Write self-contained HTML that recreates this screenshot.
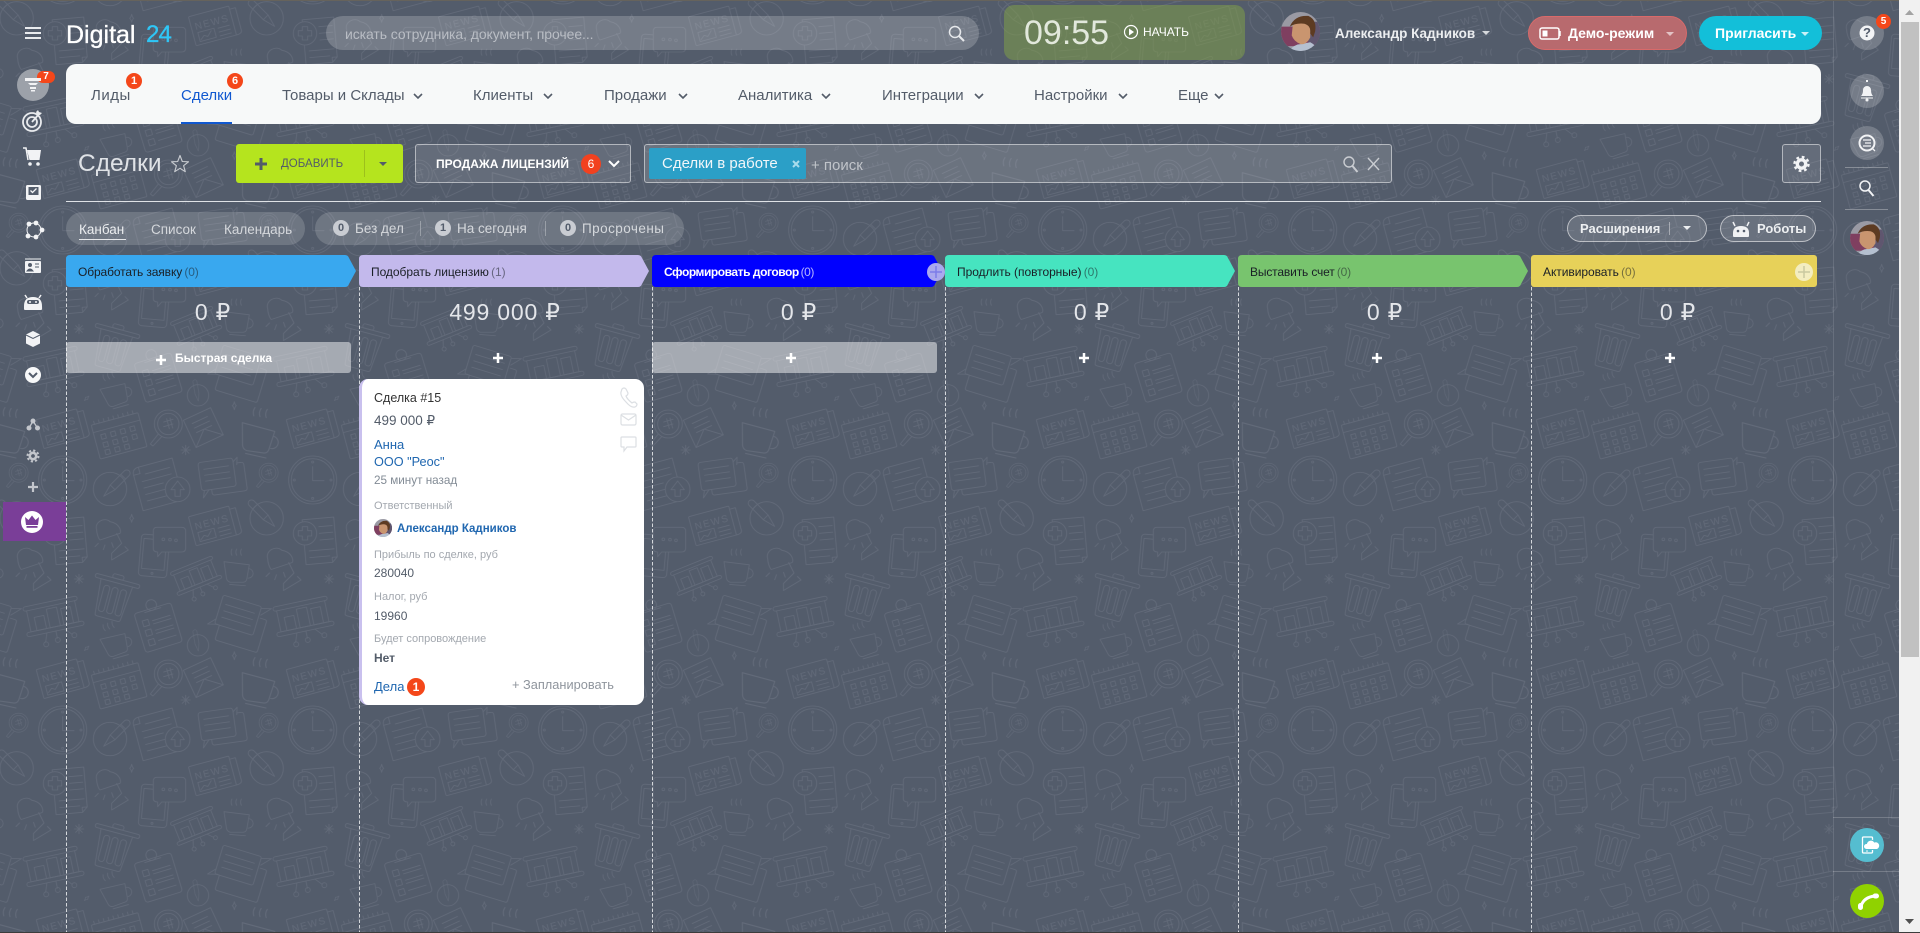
<!DOCTYPE html>
<html lang="ru"><head><meta charset="utf-8"><title>Сделки</title>
<style>
html,body{margin:0;padding:0;width:1920px;height:933px;overflow:hidden;background:#535c6b;font-family:"Liberation Sans","DejaVu Sans",sans-serif;color:#fff}
.a{position:absolute;box-sizing:border-box}
.t{position:absolute;white-space:nowrap;line-height:20px;height:20px}
svg{position:absolute;left:0;top:0}
.g{color:#535c69}
.hd{font-size:12px;color:#1a1f26;letter-spacing:-.05px}
.hd i{font-style:normal;opacity:.55;margin-left:-1px}
.sum{font-size:23px;color:#e4e6ea;transform:translateX(-50%);font-weight:400;letter-spacing:.8px}
.cl{font-size:11px;color:#a3a8af}
.cv{font-size:12px;color:#535c69}
.lk{color:#2067b0}
.pill{background:rgba(255,255,255,.16);border-radius:17px}
.b{width:16px;height:16px;border-radius:50%;background:#f4471a;color:#fff;font-size:11px;font-weight:700;text-align:center;line-height:16px;position:absolute}
.c{width:16px;height:16px;border-radius:50%;background:#c9ccd2;color:#535c6b;font-size:11px;font-weight:700;text-align:center;line-height:16px;position:absolute;top:220px}
.n{font-size:15px;top:86px;color:#535c69}
</style></head><body>

<svg width="1920" height="933">
<defs>
<g id="cup"><path d="M0 0l80 10-8 45q-2 10-12 10h-40q-10-2-12-12z"/><path d="M78 22a14 14 0 0 1-2 30"/><path d="M18 72l50 4"/><path d="M25-20q-5-10 0-20M40-20q-5-10 0-20M55-20q-5-10 0-20"/></g>
<g id="board"><rect x="0" y="0" width="180" height="14" rx="7"/><path d="M10 14v70h160v-70"/><rect x="-5" y="84" width="190" height="14" rx="7"/><rect x="30" y="40" width="32" height="44"/><rect x="74" y="22" width="34" height="62"/><rect x="120" y="30" width="32" height="54"/><path d="M90 98v24M60 98l-10 28M120 98l20 22"/><circle cx="90" cy="128" r="8"/><circle cx="50" cy="134" r="8"/><circle cx="146" cy="124" r="8"/></g>
<g id="lamp"><path d="M5 40c-8-25 25-40 40-25 30 5 35 30 30 35l-60 20c-5-5-10-20-10-30z"/><path d="M65 50l15 30-30 30v20l50-30-10-10"/><path d="M10 80l-10 10M30 85l-5 14M50 78l5 14"/></g>
<g id="mag"><circle cx="0" cy="0" r="42"/><circle cx="0" cy="0" r="32"/><path d="M-14-6l28-8M-14 8l28-8M-5-16l8 30M5-18l8 30"/><path d="M-30 30l-24 30 8 6 26-28"/></g>
<g id="stb"><path d="M0-14V14M-14 0H14M-10-10L10 10M-10 10L10-10"/></g>
<g id="star"><path d="M0-12q2 9 6 12q-4 3-6 12q-2-9-6-12q4-3 6-12z"/></g>
<g id="tile" fill="none" stroke="#626a79" stroke-width="2.600" stroke-linejoin="round" stroke-linecap="round">
<g transform="rotate(-15 490 78)"><rect x="425" y="32" width="125" height="90" rx="3"/><path d="M550 42h18v70q0 10-18 10"/><path d="M440 85h50v28h-50zM502 88h35M502 100h35M502 112h35"/><path d="M444 108l12-10 10 6 14-14"/><text x="436" y="76" font-size="30" letter-spacing="4" fill="#626a79" stroke="none" font-family="Liberation Sans,sans-serif">NEWS</text></g>
<circle cx="650" cy="55" r="50"/><g transform="translate(640 45) rotate(45)"><path d="M-50-10h60l38 10-38 10h-60a10 10 0 0 1 0-20z"/><path d="M-35-10v20M10-10v20"/></g>
<g transform="rotate(-5 810 120)"><path d="M762 55h95v120l-15 15h-80z"/><path d="M842 190v-15h15M810 80h40M810 100h40M810 120h40M775 150h75M775 170h60"/></g><circle cx="765" cy="100" r="35" fill="#535c6b"/><path d="M757 80h16v12h12v16h-12v12h-16v-12h-12v-16h12z"/>
<use href="#lamp" transform="translate(885 50)"/>
<use href="#star" transform="translate(995 55)"/>
<rect x="1020" y="105" width="85" height="125" rx="10" transform="rotate(5 1060 165)"/><rect x="1028" y="118" width="68" height="90" transform="rotate(5 1060 165)"/><circle cx="1056" cy="220" r="3"/>
<path fill="#535c6b" d="M1070 82h75q12 0 12 12v50q0 12-12 12h-60l-12 14v-14q-14 0-13-12v-50q0-12 10-12z"/><circle cx="1090" cy="118" r="4"/><circle cx="1110" cy="119" r="4"/><circle cx="1128" cy="121" r="4"/>
<use href="#cup" transform="translate(522 185) scale(.95) rotate(0)"/>
<use href="#lamp" transform="translate(648 135) scale(1.05)"/>
<use href="#stb" transform="translate(837 237)"/>
<g transform="rotate(15 940 280)"><path d="M880 235h125q6 0 6 6t-6 6h-125q-6 0-6-6t6-6z"/><path d="M893 247l10 105q0 6 8 6h62q8 0 8-6l10-105"/><rect x="925" y="222" width="34" height="13" rx="6"/><rect x="908" y="262" width="18" height="80" rx="8"/><rect x="934" y="262" width="18" height="80" rx="8"/><rect x="960" y="262" width="18" height="80" rx="8"/></g>
<use href="#board" transform="translate(360 218) rotate(-22) scale(.75)"/>
<use href="#board" transform="translate(1110 218) rotate(-22) scale(.75)"/>
<g transform="rotate(17 560 360)"><rect x="500" y="300" width="120" height="90" rx="6" fill="#535c6b"/><path d="M515 325h90M515 345h90M515 365h90M500 375l-20 22 30-8M622 305l28-8-25 28"/><path d="M515 390v40q0 6 6 6h120q6 0 6-6v-90q0-6-6-6h-15"/></g>
<use href="#board" transform="translate(668 322) rotate(-12) scale(.92)"/>
<g transform="rotate(-17 1075 385)"><rect x="1018" y="322" width="115" height="122" rx="8"/><circle cx="1075" cy="312" r="16"/><path d="M1050 328h50M1035 350h18v18h-18zM1035 380h18v18h-18zM1035 410h18v18h-18zM1065 358h55M1065 368h55M1065 388h55M1065 398h55M1065 420h55"/></g>
<use href="#cup" transform="translate(900 418) rotate(-20) scale(.95)"/>
<use href="#star" transform="translate(860 445) rotate(45) scale(.8)"/>
<use href="#star" transform="translate(553 467)"/>
<circle cx="1194" cy="436" r="32"/><g transform="translate(1190 425) rotate(80) scale(.6)"><path d="M-50-10h60l38 10-38 10h-60a10 10 0 0 1 0-20z"/></g>
<g transform="rotate(-25 480 540)"><path d="M420 480h90v90h-90z"/><path d="M420 570l45-40 45 40M440 500h50M440 515h50M440 530h50"/></g>
<use href="#cup" transform="translate(577 518) rotate(8) scale(1.25)"/>
<g transform="rotate(-15 785 535)"><rect x="718" y="490" width="125" height="90" rx="3"/><path d="M843 500h18v70q0 10-18 10"/><path d="M732 545h50v28h-50zM795 548h35M795 560h35M795 572h35"/><path d="M736 566l12-10 10 6 14-14"/><text x="728" y="532" font-size="30" letter-spacing="4" fill="#626a79" stroke="none" font-family="Liberation Sans,sans-serif">NEWS</text></g>
<g transform="rotate(-15 958 558)"><rect x="885" y="505" width="145" height="105" rx="3"/><path d="M885 528h145M895 505v-10M910 505v-10M925 505v-10M940 505v-10M955 505v-10M970 505v-10M985 505v-10M1000 505v-10M1015 505v-10"/><path d="M905 540h14v14h-14zM935 540h14v14h-14zM965 540h14v14h-14zM995 540h14v14h-14zM905 565h14v14h-14zM935 565h14v14h-14zM965 565h14v14h-14zM995 565h14v14h-14zM905 588h14v14h-14zM935 588h14v14h-14zM965 588h14v14h-14z"/></g>
<use href="#mag" transform="translate(1105 522)"/>
<use href="#stb" transform="translate(1157 600)"/>
<g transform="rotate(-8 520 680)"><rect x="450" y="628" width="105" height="85" rx="8" fill="#535c6b"/><path d="M465 650h75M465 668h75M465 686h75M458 713l-6 22 20-22M555 640l14-12-4 22"/><path d="M480 713v10q0 8 8 8h90q8 0 8-8v-70q0-8-8-8h-12"/></g>
<use href="#mag" transform="translate(656 668) scale(.68)"/>
<circle cx="788" cy="690" r="72"/><circle cx="788" cy="690" r="64"/><path d="M788 650v42h34"/><circle cx="788" cy="636" r="3"/><circle cx="788" cy="745" r="3"/><circle cx="733" cy="690" r="3"/><circle cx="843" cy="690" r="3"/>
<circle cx="930" cy="717" r="50"/><g transform="translate(945 705) rotate(135)"><path d="M-50-10h60l38 10-38 10h-60a10 10 0 0 1 0-20z"/><path d="M-35-10v20M10-10v20"/></g>
<g transform="rotate(-15 1085 700)"><path d="M1030 635h105v130h-125v-110q0-20 20-20z"/><path d="M1030 635v20h-20M1045 660h75M1030 680h90M1030 700h60M1030 720h60M1030 740h60"/></g><circle cx="1133" cy="718" r="37" fill="#535c6b"/><path d="M1133 693l20 26h-12v20h-16v-20h-12z"/>
</g>
<pattern id="bgp" patternUnits="userSpaceOnUse" x="196.67" y="0" width="250" height="250">
<g transform="scale(.33333) translate(-440 0)">
<use href="#tile"/><use href="#tile" x="-750"/><use href="#tile" x="750"/><use href="#tile" y="-750"/><use href="#tile" y="750"/><use href="#tile" x="-750" y="-750"/><use href="#tile" x="750" y="-750"/><use href="#tile" x="-750" y="750"/><use href="#tile" x="750" y="750"/>
</g></pattern>
<symbol id="ava" viewBox="0 0 40 40"><clipPath id="cp"><circle cx="20" cy="20" r="20"/></clipPath><g clip-path="url(#cp)"><rect width="40" height="40" fill="#9a9aa4"/><rect y="15" width="40" height="20" fill="#7f3f60"/><rect x="28" y="10" width="12" height="26" fill="#5f566f"/><path d="M8 40q6-7 12-7l10-2q6 3 8 9z" fill="#b5c0d0"/><path d="M12 14Q20 8 30 14L30 26Q26 34 20 33 13 30 11 24z" fill="#c9956f"/><path d="M9 15Q14 3 28 4 37 8 35 20L33 26 30 22Q31 14 24 12 15 11 9 15z" fill="#5d3b22"/></g></symbol>
</defs>
<rect width="1920" height="933" fill="#535c6b"/>
<rect width="1920" height="933" fill="url(#bgp)"/>
<g stroke="#d5d8dc" stroke-dasharray="3.5 2" fill="none"><path d="M66.500 287V932M359.500 287V932M652.500 287V932M945.500 287V932M1238.500 287V932M1531.500 287V932"/></g>
<path d="M1833.500 0V932" stroke="rgba(255,255,255,.12)"/>
<path d="M1845 167.500h43M1845 209.500h43" stroke="rgba(255,255,255,.3)"/>
<path d="M1833 817.500h66M1833 871.500h66" stroke="rgba(255,255,255,.2)"/>
<rect x="0" y="0" width="1899" height="1" fill="#66635c"/>
<path d="M70 255H345q3 0 4 3L356 271 349 284q-1 3-4 3H70q-4 0-4-4V259q0-4 4-4z" fill="#39a8ef"/>
<path d="M363 255H638q3 0 4 3L649 271 642 284q-1 3-4 3H363q-4 0-4-4V259q0-4 4-4z" fill="#c3b9ec"/>
<path d="M656 255H931q3 0 4 3L942 271 935 284q-1 3-4 3H656q-4 0-4-4V259q0-4 4-4z" fill="#0000ff"/>
<path d="M949 255H1224q3 0 4 3L1235 271 1228 284q-1 3-4 3H949q-4 0-4-4V259q0-4 4-4z" fill="#46e4c0"/>
<path d="M1242 255H1517q3 0 4 3L1528 271 1521 284q-1 3-4 3H1242q-4 0-4-4V259q0-4 4-4z" fill="#78c46e"/>
<rect x="1531" y="255" width="286" height="32" rx="3" fill="#e7d159"/>
</svg>

<!-- header -->
<div class="t" style="left:66px;top:24px;font-size:25px;line-height:22px;height:22px;-webkit-text-stroke:.35px #fff">Digital</div>
<div class="t" style="left:146px;top:24px;font-size:24px;line-height:22px;height:22px;letter-spacing:-.8px;color:#2fc6f6;-webkit-text-stroke:.3px #2fc6f6">24</div>
<div class="a" style="left:326px;top:16px;width:653px;height:34px;border-radius:17px;background:rgba(255,255,255,.2)"></div>
<div class="t" style="left:345px;top:24px;font-size:14px;color:#b9bdc4;letter-spacing:-.08px">искать сотрудника, документ, прочее...</div>
<div class="a" style="left:1004px;top:5px;width:241px;height:55px;border-radius:10px;background:rgba(132,164,70,.5)"></div>
<div class="t" style="left:1024px;top:15px;font-size:34px;line-height:36px;height:36px;color:#e2e8dc">09:55</div>
<div class="t" style="left:1143px;top:22px;font-size:12px;color:#fff">НАЧАТЬ</div>
<div class="t" style="left:1335px;top:24px;font-size:13.5px;font-weight:700;color:#eceef0">Александр Кадников</div>
<div class="a" style="left:1528px;top:16px;width:159px;height:34px;border-radius:17px;background:#b86a6e;border:1px solid #d96a6a"></div>
<div class="t" style="left:1568px;top:23px;font-size:14px;font-weight:700;color:#fff">Демо-режим</div>
<div class="a" style="left:1699px;top:16px;width:123px;height:34px;border-radius:17px;background:#13bfd9"></div>
<div class="t" style="left:1715px;top:23px;font-size:14px;font-weight:700;color:#fff">Пригласить</div>

<!-- nav -->
<div class="a" style="left:66px;top:64px;width:1755px;height:60px;border-radius:10px;background:#f7f9f9"></div>
<div class="t n" style="left:91px;letter-spacing:.5px">Лиды</div>
<div class="t n" style="left:181px;color:#1058d0">Сделки</div>
<div class="a" style="left:181px;top:122px;width:51px;height:2px;background:#1058d0"></div>
<div class="t n" style="left:282px">Товары и Склады</div>
<div class="t n" style="left:473px">Клиенты</div>
<div class="t n" style="left:604px">Продажи</div>
<div class="t n" style="left:738px">Аналитика</div>
<div class="t n" style="left:882px">Интеграции</div>
<div class="t n" style="left:1034px">Настройки</div>
<div class="t n" style="left:1178px">Еще</div>
<div class="b" style="left:126px;top:73px">1</div>
<div class="b" style="left:227px;top:73px">6</div>

<!-- toolbar -->
<div class="t" style="left:78px;top:151px;font-size:24.500px;line-height:26px;height:26px;color:#dfe2e6">Сделки</div>
<div class="a" style="left:236px;top:144px;width:167px;height:39px;border-radius:3px;background:#b5e41e"></div>
<div class="t g" style="left:281px;top:154px;font-size:11.500px">ДОБАВИТЬ</div>
<div class="a" style="left:415px;top:144px;width:216px;height:39px;border-radius:3px;background:rgba(255,255,255,.1);border:1px solid rgba(255,255,255,.5)"></div>
<div class="t" style="left:436px;top:154px;font-size:12px;font-weight:700">ПРОДАЖА ЛИЦЕНЗИЙ</div>
<div class="b" style="left:581px;top:154px;width:20px;height:20px;line-height:20px;font-size:12px;background:#f2411f;font-weight:400">6</div>
<div class="a" style="left:644px;top:144px;width:748px;height:39px;border-radius:3px;background:rgba(255,255,255,.14);border:1px solid rgba(255,255,255,.5)"></div>
<div class="a" style="left:649px;top:148px;width:157px;height:31px;border-radius:2px;background:#2b9fc7"></div>
<div class="t" style="left:662px;top:154px;font-size:15px;color:#f1f6f9">Сделки в работе</div>
<div class="t" style="left:811px;top:156px;font-size:15px;color:#c0c4ca">+ поиск</div>
<div class="a" style="left:1782px;top:144px;width:39px;height:39px;border-radius:3px;background:rgba(255,255,255,.1);border:1px solid rgba(255,255,255,.5)"></div>
<div class="a" style="left:66px;top:201px;width:1755px;height:1px;background:#dfe2e6"></div>

<!-- view row -->
<div class="a pill" style="left:66px;top:212px;width:239px;height:33px"></div>
<div class="t" style="left:79px;top:220px;font-size:13.500px;color:#eceef0">Канбан</div>
<div class="a" style="left:79px;top:239px;width:47px;height:1px;background:#e3e5e8"></div>
<div class="t" style="left:151px;top:220px;font-size:13.500px;color:#d5d8dc">Список</div>
<div class="t" style="left:224px;top:220px;font-size:13.500px;color:#d5d8dc">Календарь</div>
<div class="a pill" style="left:315px;top:212px;width:369px;height:33px"></div>
<div class="c" style="left:333px">0</div><div class="t" style="left:355px;top:219px;font-size:13.500px;color:#d5d8dc">Без дел</div>
<div class="a" style="left:420px;top:221px;width:1px;height:15px;background:rgba(255,255,255,.3)"></div>
<div class="c" style="left:435px">1</div><div class="t" style="left:457px;top:219px;font-size:13.500px;color:#d5d8dc">На сегодня</div>
<div class="a" style="left:545px;top:221px;width:1px;height:15px;background:rgba(255,255,255,.3)"></div>
<div class="c" style="left:560px">0</div><div class="t" style="left:582px;top:219px;font-size:13.500px;letter-spacing:.45px;color:#d5d8dc">Просрочены</div>
<div class="a" style="left:1567px;top:215px;width:140px;height:27px;border-radius:14px;background:rgba(255,255,255,.13);border:1px solid rgba(255,255,255,.55)"></div>
<div class="t" style="left:1580px;top:219px;font-size:13px;font-weight:700;color:#edeff1">Расширения</div>
<div class="a" style="left:1669px;top:222px;width:1px;height:13px;background:rgba(255,255,255,.4)"></div>
<div class="a" style="left:1720px;top:215px;width:96px;height:27px;border-radius:14px;background:rgba(255,255,255,.13);border:1px solid rgba(255,255,255,.55)"></div>
<div class="t" style="left:1757px;top:219px;font-size:13px;font-weight:700;color:#edeff1">Роботы</div>

<!-- kanban headers -->
<div class="t hd" style="left:78px;top:262px;letter-spacing:-.12px">Обработать заявку <i>(0)</i></div>
<div class="t hd" style="left:371px;top:262px">Подобрать лицензию <i>(1)</i></div>
<div class="t hd" style="left:664px;top:262px;color:#fff;font-weight:700;letter-spacing:-.45px">Сформировать договор <i style="font-weight:400;opacity:.7">(0)</i></div>
<div class="t hd" style="left:957px;top:262px">Продлить (повторные) <i>(0)</i></div>
<div class="t hd" style="left:1250px;top:262px;letter-spacing:-.15px">Выставить счет <i>(0)</i></div>
<div class="t hd" style="left:1543px;top:262px">Активировать <i>(0)</i></div>

<div class="t sum" style="left:213px;top:302px">0 ₽</div>
<div class="t sum" style="left:505px;top:302px">499 000 ₽</div>
<div class="t sum" style="left:799px;top:302px">0 ₽</div>
<div class="t sum" style="left:1092px;top:302px">0 ₽</div>
<div class="t sum" style="left:1385px;top:302px">0 ₽</div>
<div class="t sum" style="left:1678px;top:302px">0 ₽</div>

<div class="a" style="left:66px;top:342px;width:285px;height:31px;border-radius:3px;background:rgba(255,255,255,.48)"></div>
<div class="t" style="left:175px;top:348px;font-size:12px;font-weight:700">Быстрая сделка</div>
<div class="a" style="left:652px;top:342px;width:285px;height:31px;border-radius:3px;background:rgba(255,255,255,.48)"></div>

<!-- card -->
<div class="a" style="left:359px;top:379px;width:285px;height:326px;border-radius:9px;background:#fff;border-left:3px solid #c9c0ee"></div>
<div class="t" style="left:374px;top:388px;font-size:12.500px;color:#333">Сделка #15</div>
<div class="t" style="left:374px;top:411px;font-size:13.500px;color:#535c69">499 000 ₽</div>
<div class="t lk" style="left:374px;top:435px;font-size:13px">Анна</div>
<div class="t lk" style="left:374px;top:452px;font-size:12.700px">ООО "Реос"</div>
<div class="t" style="left:374px;top:471px;font-size:11.700px;color:#828b95">25 минут назад</div>
<div class="t cl" style="left:374px;top:496px">Ответственный</div>
<div class="t lk" style="left:397px;top:519px;font-size:11.500px;font-weight:700">Александр Кадников</div>
<div class="t cl" style="left:374px;top:545px">Прибыль по сделке, руб</div>
<div class="t cv" style="left:374px;top:563px">280040</div>
<div class="t cl" style="left:374px;top:587px">Налог, руб</div>
<div class="t cv" style="left:374px;top:606px">19960</div>
<div class="t cl" style="left:374px;top:629px">Будет сопровождение</div>
<div class="t cv" style="left:374px;top:648px;font-weight:700">Нет</div>
<div class="t lk" style="left:374px;top:677px;font-size:13px">Дела</div>
<div class="b" style="left:407px;top:678px;width:18px;height:18px;line-height:18px;font-size:12px">1</div>
<div class="t" style="left:512px;top:675px;font-size:12.800px;color:#8f959d">+ Запланировать</div>

<!-- scrollbar -->
<div class="a" style="left:1899px;top:0;width:21px;height:933px;background:#f1f1f1"></div>
<div class="a" style="left:1901px;top:22px;width:18px;height:635px;background:#c1c1c1"></div>
<div class="a" style="left:0;top:932px;width:1920px;height:1px;background:#3c3c3c"></div>

<!-- left sidebar bg -->
<div class="a" style="left:3px;top:502px;width:63px;height:39px;background:#7a3e98"></div>
<div class="a" style="left:17px;top:69px;width:32px;height:32px;border-radius:50%;background:#9ca1a9"></div>
<div class="a" style="left:37px;top:71px;width:18px;height:12px;border-radius:6px;background:#f4471a;font-size:10px;font-weight:700;text-align:center;line-height:12px">7</div>
<div class="a" style="left:1850px;top:16px;width:34px;height:34px;border-radius:50%;background:rgba(255,255,255,.2)"></div>
<div class="a" style="left:1850px;top:74px;width:34px;height:34px;border-radius:50%;background:rgba(255,255,255,.2)"></div>
<div class="a" style="left:1850px;top:126px;width:34px;height:34px;border-radius:50%;background:rgba(255,255,255,.2)"></div>
<div class="a" style="left:1876px;top:14px;width:15px;height:15px;border-radius:50%;background:#f4471a;font-size:10px;text-align:center;line-height:15px;font-weight:700">5</div>
<div class="a" style="left:1850px;top:828px;width:34px;height:34px;border-radius:50%;background:#55bdd0"></div>
<div class="a" style="left:1850px;top:884px;width:34px;height:34px;border-radius:50%;background:#90d200"></div>
<div class="t" style="left:1860px;top:23px;width:14px;font-size:13px;font-weight:700;text-align:center;color:#535c6b;z-index:3">?</div>

<!-- icons -->
<svg width="1920" height="933" fill="none" style="z-index:2">
<path d="M25 28h16M25 33h16M25 38h16" stroke="#e9ebee" stroke-width="2"/>
<use href="#ava" x="1281" y="12" width="39" height="39"/>
<use href="#ava" x="374" y="519" width="18" height="18"/>
<use href="#ava" x="1850" y="221" width="34" height="34"/>
<!-- header icons -->
<g stroke="#e6e8eb" stroke-width="1.500"><circle cx="955" cy="32" r="5.500"/><path d="M959 36l5 5" stroke-width="2"/></g>
<circle cx="1131" cy="32" r="6.500" stroke="#fff" stroke-width="1.200"/><path d="M1129 28.500v7l5-3.500z" fill="#fff"/>
<path d="M1482 31h8l-4 4z" fill="#d5d8dc"/>
<rect x="1540" y="28" width="19" height="11" rx="2" stroke="#fff" stroke-width="1.500"/><rect x="1542.500" y="30.500" width="5" height="6" fill="#fff"/><path d="M1560 31v5" stroke="#fff" stroke-width="1.500"/>
<path d="M1666 32h8l-4 4z" fill="#e3c3c5"/><path d="M1801 32h8l-4 4z" fill="#c8f1f7"/>
<!-- nav chevrons -->
<g stroke="#535c69" stroke-width="1.600"><path d="M414 94l4 4 4-4M544 94l4 4 4-4M679 94l4 4 4-4M822 94l4 4 4-4M975 94l4 4 4-4M1119 94l4 4 4-4M1215 94l4 4 4-4"/></g>
<!-- toolbar icons -->
<path d="M180 155.500l2.300 6 6.200.3-4.900 3.900 1.700 6-5.300-3.400-5.300 3.400 1.700-6-4.900-3.900 6.200-.3z" stroke="#c9ccd1" stroke-width="1.100" stroke-linejoin="round"/>
<path d="M261 158v12M255 164h12" stroke="#535c69" stroke-width="3"/>
<path d="M364.500 150v27" stroke="#9dc01c"/><path d="M379 162h8l-4 4z" fill="#535c69"/>
<path d="M609 161l5 5 5-5" stroke="#fff" stroke-width="2"/>
<path d="M793 161l6 6M799 161l-6 6" stroke="#a8dcec" stroke-width="2"/>
<g stroke="#c9ccd1" stroke-width="1.400"><circle cx="1349" cy="162" r="5"/><path d="M1352.500 166l5 6" stroke-width="2"/><path d="M1368 158l11 12M1379 158l-11 12"/></g>
<g transform="translate(1801.500 164)"><circle r="4.200" stroke="#f2f3f5" stroke-width="3.400"/><circle r="7" stroke="#f2f3f5" stroke-width="2.400" stroke-dasharray="2.750 2.750"/></g>
<path d="M1683 226h8l-4 4z" fill="#eceef0"/>
<g fill="#f0f1f3"><path d="M1733 236v-3q0-7 8-7t8 7v3q0 1-1 1h-14q-1 0-1-1z"/><path d="M1735 226l-2-4M1747 226l2-4" stroke="#f0f1f3" stroke-width="1.500"/></g><circle cx="1738" cy="231" r="1.300" fill="#535c6b"/><circle cx="1744" cy="231" r="1.300" fill="#535c6b"/>
<!-- column plus -->
<circle cx="936" cy="272" r="9" fill="#aaa8ee"/><path d="M936 266v12M930 272h12" stroke="#7c7ce8" stroke-width="1.500"/>
<circle cx="1804" cy="272" r="9" fill="#f3edc0"/><path d="M1804 266v12M1798 272h12" stroke="#c9c9a0" stroke-width="1.500"/>
<g stroke="#fff" stroke-width="2.500"><path d="M161 355v10M156 360h10M498 353v10M493 358h10M791 353v10M786 358h10M1084 353v10M1079 358h10M1377 353v10M1372 358h10M1670 353v10M1665 358h10"/></g>
<!-- card icons -->
<g stroke="#dcdfe3" stroke-width="1.200">
<path d="M622 389q2-2 4 0l2 4q0 2-2 3 1 3 6 7 1-1 3-1l2 2q0 2-2 3-4 1-9-5-6-6-5-10z"/>
<rect x="621" y="414" width="15" height="11" rx="1.500"/><path d="M621 415l7.500 5 7.500-5"/>
<path d="M622 437h13q1 0 1 1v8q0 1-1 1h-8l-3 4v-4h-2q-1 0-1-1v-8q0-1 1-1z"/>
</g>
<!-- left sidebar -->
<g fill="#f2f3f5"><rect x="25" y="78" width="16" height="3"/><path d="M28 83h10l-2 2h-6z"/><rect x="30" y="87" width="6" height="2"/><rect x="31" y="90" width="4" height="1.500"/></g>
<g stroke="#e9ebee" stroke-width="1.800"><circle cx="32" cy="122" r="9"/><circle cx="32" cy="122" r="5"/><path d="M32 122l7-8"/></g><path d="M36 112l2-2 1 2 3 1-2 2-3 0z" fill="#e9ebee"/>
<g fill="#f2f3f5"><path d="M27 150h14l-1.500 10H29.500z"/><circle cx="30" cy="164" r="1.800"/><circle cx="38" cy="164" r="1.800"/></g><path d="M23 148h3l2 12" stroke="#f2f3f5" stroke-width="1.500"/>
<rect x="26" y="185" width="15" height="15" rx="1.500" fill="#f2f3f5"/><rect x="28.500" y="187" width="10" height="8" fill="#535c6b"/><path d="M30.500 190.500l2 2 4-4" stroke="#f2f3f5" stroke-width="1.300"/>
<circle cx="34" cy="230" r="7" stroke="#f2f3f5" stroke-width="1"/><g fill="#f2f3f5"><circle cx="29" cy="224" r="2.400"/><circle cx="36" cy="223" r="2.400"/><circle cx="42" cy="230" r="2.400"/><circle cx="36" cy="237" r="2.400"/><circle cx="28" cy="236" r="2.400"/></g>
<rect x="25" y="261" width="16" height="12" rx="1" fill="#f2f3f5"/><path d="M25 259h16" stroke="#f2f3f5"/><circle cx="30" cy="265" r="2" fill="#535c6b"/><path d="M27 271q3-4 6 0zM35 264h4M35 267h4" fill="#535c6b" stroke="#535c6b"/>
<g fill="#f2f3f5"><path d="M24 306q0-9 9-9t9 9v3q0 1-1 1H25q-1 0-1-1z"/><path d="M27 298l-2-3M39 298l2-3" stroke="#f2f3f5" stroke-width="1.500"/></g><rect x="27" y="300" width="12" height="4" rx="2" fill="#535c6b"/><circle cx="30" cy="302" r="1" fill="#f2f3f5"/><circle cx="36" cy="302" r="1" fill="#f2f3f5"/>
<path d="M33 331l7 3.500v9l-7 3.500-7-3.500v-9z" fill="#f2f3f5"/><path d="M26 335l7 3.500 7-3.500" stroke="#535c6b"/>
<circle cx="33" cy="375" r="8" fill="#f7f8f9"/><path d="M29 373l4 4 4-4" stroke="#535c6b" stroke-width="2"/>
<g fill="#c3c6cc"><circle cx="33" cy="421" r="2.500"/><circle cx="29" cy="428" r="2.500"/><circle cx="37.500" cy="428" r="2.500"/></g><path d="M33 421l-4 7M33 421l4.500 7" stroke="#c3c6cc" stroke-width="1.300"/>
<g transform="translate(33 456)"><circle r="3.200" stroke="#c3c6cc" stroke-width="2.600"/><circle r="5.500" stroke="#c3c6cc" stroke-width="2" stroke-dasharray="2.160 2.160"/></g>
<path d="M33 482v10M28 487h10" stroke="#c3c6cc" stroke-width="2.200"/>
<circle cx="32" cy="522" r="11" fill="#fff"/><path d="M25 517l3.500 3 3.500-4.500 3.500 4.500 3.500-3-1 8H26z" fill="#7a3e98"/><rect x="26.500" y="526" width="11" height="1.800" fill="#7a3e98"/>
<!-- right sidebar -->
<circle cx="1867" cy="33" r="7.500" fill="#f2f3f5"/>
<path d="M1861 96q2-2 2-6a4 4 0 0 1 8 0q0 4 2 6z" fill="#f2f3f5"/><path d="M1867 80v2" stroke="#f2f3f5" stroke-width="2"/><path d="M1861 98h12" stroke="#f2f3f5" stroke-width="1"/><circle cx="1867" cy="100" r="1.500" fill="#f2f3f5"/>
<circle cx="1867" cy="143" r="7.500" stroke="#f2f3f5" stroke-width="2"/><path d="M1863 140h8M1865 143h6M1863 146h8M1872 148l3 3" stroke="#f2f3f5" stroke-width="1.300"/>
<circle cx="1865" cy="186" r="5" stroke="#f2f3f5" stroke-width="1.500"/><path d="M1868.500 190l5 6" stroke="#f2f3f5" stroke-width="2"/>
<rect x="1862.500" y="837" width="10" height="16" rx="1" stroke="#fff" stroke-width="1.300"/><circle cx="1867" cy="851" r=".8" fill="#fff"/>
<path d="M1866.500 849.500a3 3 0 0 1 0-6a4.500 4.500 0 0 1 8-1.500a3.800 3.800 0 0 1 2.500 7.500z" fill="#fff" stroke="#55bdd0" stroke-width="1"/>
<path d="M1861 906Q1864 897 1875 896" stroke="#fff" stroke-width="3" stroke-linecap="round"/>
<path d="M1860.500 907.500v-2M1875 896h1.500" stroke="#fff" stroke-width="5" stroke-linecap="round"/>
<!-- scroll arrows -->
<path d="M1905 15l4.500-5 4.500 5z" fill="#a3a3a3"/><path d="M1905 919l4.500 5 4.500-5z" fill="#505050"/>
</svg>
</body></html>
